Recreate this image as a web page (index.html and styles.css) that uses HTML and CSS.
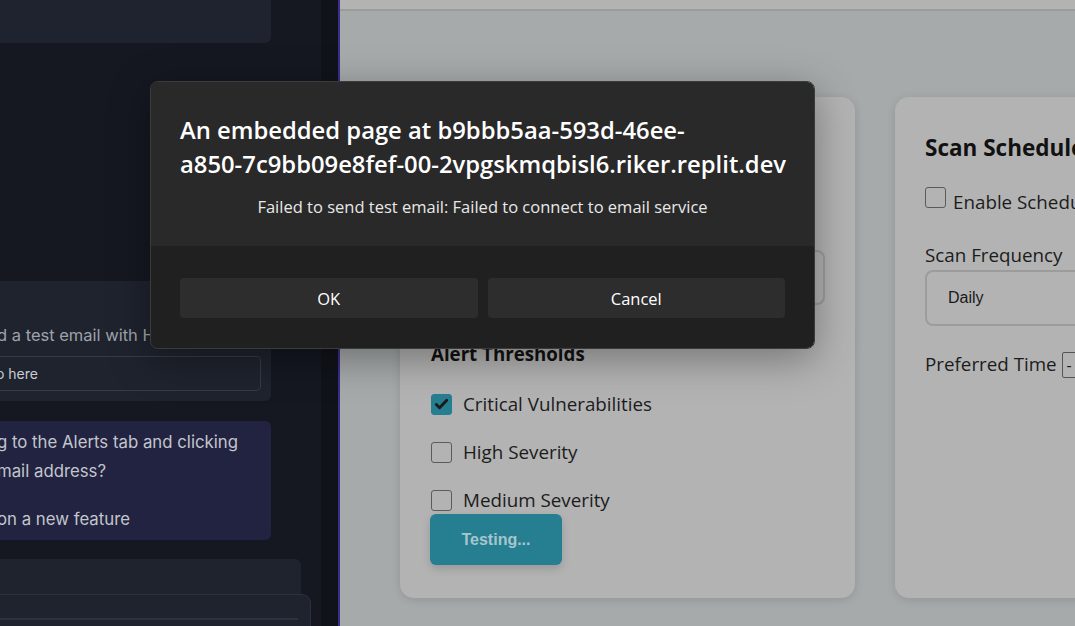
FILE: index.html
```html
<!DOCTYPE html>
<html lang="en">
<head>
<meta charset="utf-8">
<title>Alerts</title>
<link rel="stylesheet" href="styles.css">
</head>
<body>
<div class="app">
  <aside class="chat">
    <div class="chat-card chat-top"></div>
    <div class="chat-card chat-msg">
      <p class="msg-text">d a test email with Hello</p>
      <div class="chat-input">o here</div>
    </div>
    <div class="chat-card chat-ai">
      <p>g to the Alerts tab and clicking<br>mail address?</p>
      <p>on a new feature</p>
    </div>
    <div class="chat-card chat-bottom"></div>
    <div class="chat-compose"><div class="compose-line"></div></div>
  </aside>
  <div class="gutter"></div>
  <main class="page">
    <header class="topbar"></header>
    <div class="cards">
      <section class="card">
        <h2 class="card-title">Email Notifications</h2>
        <label class="field-label spaced">Email Address</label>
        <div class="text-input"></div>
        <h3 class="sub-title">Alert Thresholds</h3>
        <div class="check-row first"><span class="box checked"><svg viewBox="0 0 20 20" width="20" height="20"><path d="M4.5 10.5l3.5 3.5 7.5-8" fill="none" stroke="#1b1b1b" stroke-width="3" stroke-linecap="round" stroke-linejoin="round"/></svg></span><span>Critical Vulnerabilities</span></div>
        <div class="check-row"><span class="box"></span><span>High Severity</span></div>
        <div class="check-row"><span class="box"></span><span>Medium Severity</span></div>
        <button class="btn-test">Testing...</button>
      </section>
      <section class="card">
        <h2 class="card-title">Scan Schedule</h2>
        <div class="check-row sched"><span class="box"></span><span class="sched-text">Enable Scheduled Scans</span></div>
        <label class="field-label freq">Scan Frequency</label>
        <div class="select">Daily</div>
        <div class="time-row">Preferred Time <span class="time-input">-</span></div>
      </section>
    </div>
  </main>
</div>

<div class="dialog">
  <div class="dialog-body">
    <h1 class="dialog-title">An embedded page at b9bbb5aa-593d-46ee-<br>a850-7c9bb09e8fef-00-2vpgskmqbisl6.riker.replit.dev</h1>
    <p class="dialog-msg">Failed to send test email: Failed to connect to email service</p>
  </div>
  <div class="dialog-actions">
    <button class="dlg-btn">OK</button>
    <button class="dlg-btn">Cancel</button>
  </div>
</div>
</body>
</html>
```
FILE: styles.css
```css
* { box-sizing: border-box; }
html, body { margin: 0; padding: 0; height: 100%; }
body {
  width: 1075px;
  height: 626px;
  overflow: hidden;
  font-family: "Open Sans", "Noto Sans", sans-serif;
  background: #151821;
  position: relative;
}
.app { display: flex; height: 626px; }

/* left chat panel */
.chat {
  width: 321px;
  flex: none;
  background: #151821;
  display: flex;
  flex-direction: column;
  overflow: hidden;
  font-family: "Inter", "Open Sans", sans-serif;
}
.chat-card { background: #1f232e; width: 271px; flex: none; }
.chat-top { height: 43px; background: #1f2330; border-bottom-right-radius: 6px; }
.chat-msg {
  margin-top: 238px;
  height: 120px;
  border-radius: 0 6px 6px 0;
  padding: 42px 10px 0 0;
}
.msg-text {
  margin: 0 0 0 -3px;
  white-space: nowrap;
  color: #9ea2a9;
  font-size: 16.5px;
  line-height: 24px;
}
.chat-input {
  margin-top: 9px;
  height: 35px;
  border: 1px solid #363b49;
  border-left: none;
  border-radius: 0 5px 5px 0;
  color: #c9ccd2;
  font-size: 14px;
  line-height: 33px;
  padding-left: 0;
  text-indent: -4px;
}
.chat-ai {
  margin-top: 20px;
  height: 119px;
  background: #222340;
  border-radius: 0 6px 6px 0;
  padding-top: 7px;
}
.chat-ai p {
  margin: 0 0 19px -3px;
  color: #c2c6cd;
  font-size: 16.8px;
  line-height: 29px;
  white-space: nowrap;
}
.chat-bottom { margin-top: 19px; width: 301px; height: 60px; border-top-right-radius: 6px; }
.chat-compose {
  margin-top: -25px;
  width: 311px;
  height: 60px;
  flex: none;
  background: #1f232e;
  border: 1px solid #2b3040;
  border-left: none;
  border-top-right-radius: 9px;
  padding-top: 23px;
}
.compose-line { width: 298px; height: 2px; background: #2c3141; }

.gutter {
  width: 19px;
  flex: none;
  background: #10131a;
  border-right: 2px solid #3a2d8c;
}

/* right dimmed page */
.page {
  flex: 1;
  background: #a6aaaa;
  overflow: hidden;
  font-family: "Open Sans", "Noto Sans", sans-serif;
  color: #1c1c1c;
}
.topbar { height: 11px; background: #b3b3b3; border-bottom: 2px solid #9b9b9b; }
.cards {
  display: flex;
  gap: 40px;
  padding: 86px 0 0 60px;
}
.card {
  width: 455px;
  flex: none;
  background: #b3b3b3;
  border-radius: 14px;
  padding: 35px 30px 33px 30px;
  box-shadow: 0 2px 10px rgba(0,0,0,0.12);
}
.card-title {
  margin: 0;
  font-size: 22.5px;
  line-height: 32px;
  font-weight: 700;
  color: #111;
}
.field-label { display: block; font-size: 18.8px; line-height: 24px; }
.field-label.spaced { margin-top: 55px; }
.text-input {
  margin-top: 7px;
  height: 55px;
  border: 2px solid #9c9c9c;
  border-radius: 8px;
}
.sub-title {
  margin: 37px 0 0 1px;
  font-size: 18.7px;
  line-height: 24px;
  font-weight: 700;
  color: #111;
}
.check-row {
  display: flex;
  align-items: center;
  gap: 11px;
  height: 26px;
  margin-top: 22px;
  padding-left: 1px;
  font-size: 18.8px;
  color: #1c1c1c;
  white-space: nowrap;
}
.check-row.first { margin-top: 25px; }
.box {
  width: 21px;
  height: 21px;
  flex: none;
  border: 1.5px solid #5b5b5b;
  border-radius: 3px;
  display: flex;
  align-items: center;
  justify-content: center;
}
.box.checked { background: #267e91; border-color: #267e91; }
.btn-test {
  display: block;
  margin-top: 1px;
  width: 132px;
  height: 51px;
  border: none;
  border-radius: 6px;
  background: #267e91;
  color: #a6c6cd;
  font-family: "Liberation Sans", Arial, sans-serif;
  font-weight: 700;
  font-size: 16px;
  box-shadow: 0 4px 8px rgba(0,0,0,0.15);
}
.check-row.sched {
  margin-top: 23px;
  padding-left: 0;
  gap: 7px;
  height: 30px;
  align-items: flex-start;
}
.sched-text { line-height: 30px; }
.field-label.freq { margin-top: 26px; }
.select {
  margin-top: 3px;
  height: 56px;
  border: 2px solid #9c9c9c;
  border-radius: 8px;
  padding-left: 21px;
  font-family: "Liberation Sans", Arial, sans-serif;
  font-size: 16px;
  line-height: 52px;
  color: #1a1a1a;
}
.time-row {
  margin-top: 26px;
  font-size: 18.8px;
  line-height: 24px;
  white-space: nowrap;
}
.time-input {
  display: inline-block;
  border: 1px solid #555;
  border-radius: 2px;
  padding: 0 4px;
  line-height: 24px;
  font-size: 16px;
}

/* dialog */
.dialog {
  position: absolute;
  left: 150px;
  top: 81px;
  width: 665px;
  border-radius: 8px;
  overflow: hidden;
  border: 1px solid #3b3b3b;
  box-shadow: 0 10px 40px rgba(0,0,0,0.35);
  font-family: "Open Sans", "Noto Sans", sans-serif;
}
.dialog-body { background: #292929; padding: 31px 29px 28px; }
.dialog-title {
  margin: 0;
  font-size: 23.8px;
  line-height: 34px;
  font-weight: 600;
  color: #fff;
  white-space: nowrap;
}
.dialog-msg {
  margin: 15px 0 0;
  text-align: center;
  font-size: 16.5px;
  line-height: 22px;
  color: #e8e8e8;
}
.dialog-actions {
  background: #202020;
  padding: 32px 29px 30px;
  display: flex;
  gap: 10px;
}
.dlg-btn {
  flex: 1;
  height: 40px;
  border: none;
  border-radius: 4px;
  background: #2d2d2d;
  color: #fff;
  font-family: "Open Sans", "Noto Sans", sans-serif;
  font-size: 16.5px;
}
```
